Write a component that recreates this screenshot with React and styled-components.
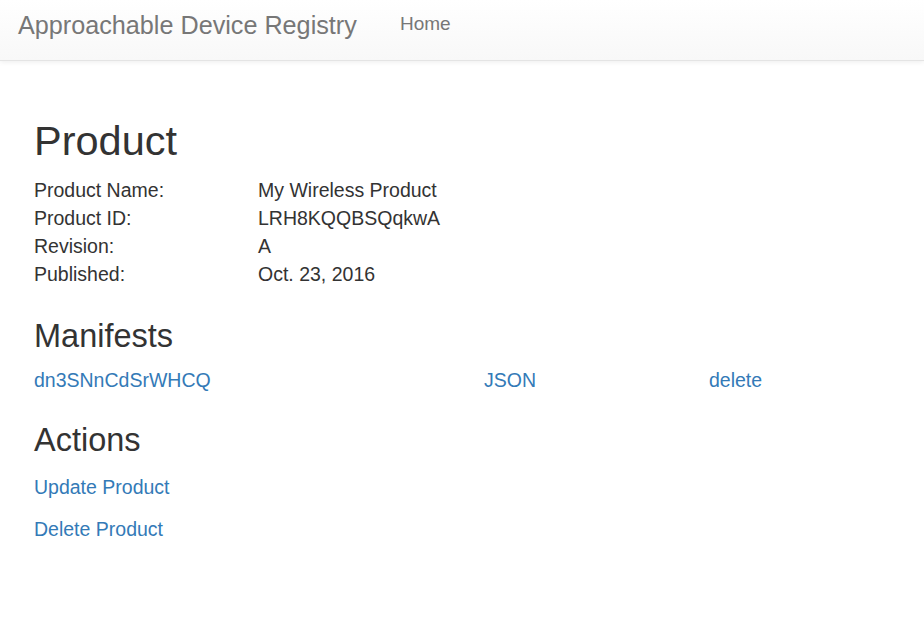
import React from 'react';
import styled, { createGlobalStyle } from 'styled-components';

const GlobalStyle = createGlobalStyle`
  html, body {
    margin: 0;
    padding: 0;
    background: #fff;
  }
  body {
    font-family: "Liberation Sans", Arial, Helvetica, sans-serif;
    color: #333;
  }
`;

const Navbar = styled.nav`
  display: flex;
  align-items: flex-start;
  height: 60px;
  padding: 0 18px;
  box-sizing: content-box;
  background-image: linear-gradient(to bottom, #fff 0, #f8f8f8 100%);
  border-bottom: 1px solid #e4e4e4;
  box-shadow: 0 1px 5px rgba(0, 0, 0, 0.075);
`;

const Brand = styled.a`
  width: 382px;
  padding-top: 10px;
  font-size: 25.2px;
  line-height: 30px;
  color: #777;
  text-decoration: none;
`;

const NavLink = styled.a`
  padding-top: 12px;
  font-size: 19px;
  line-height: 24px;
  color: #777;
  text-decoration: none;
`;

const Main = styled.main`
  padding: 0 34px;
`;

const Title = styled.h1`
  margin: 57px 0 0;
  font-size: 41.5px;
  font-weight: 500;
  line-height: 1.1;
  color: #333;
`;

const Section = styled.h3`
  margin: ${p => p.$top}px 0 0;
  font-size: 32.5px;
  font-weight: 500;
  line-height: 1.1;
  color: #333;
`;

const Details = styled.dl`
  display: grid;
  grid-template-columns: 224px 1fr;
  margin: 12px 0 0;
  font-size: 19.5px;
  line-height: 28px;

  dt, dd {
    margin: 0;
  }
`;

const ManifestRow = styled.div`
  display: grid;
  grid-template-columns: 450px 225px 1fr;
  margin-top: 12px;
  font-size: 19.5px;
  line-height: 28px;
`;

const Link = styled.a`
  color: #337ab7;
  text-decoration: none;
`;

const ActionItem = styled.p`
  margin: ${p => p.$top}px 0 0;
  font-size: 19.5px;
  line-height: 28px;
`;

const product = [
  ['Product Name:', 'My Wireless Product'],
  ['Product ID:', 'LRH8KQQBSQqkwA'],
  ['Revision:', 'A'],
  ['Published:', 'Oct. 23, 2016'],
];

export default function App() {
  return (
    <>
      <GlobalStyle />
      <Navbar>
        <Brand href="#">Approachable Device Registry</Brand>
        <NavLink href="#">Home</NavLink>
      </Navbar>
      <Main>
        <Title>Product</Title>
        <Details>
          {product.map(([label, value]) => (
            <React.Fragment key={label}>
              <dt>{label}</dt>
              <dd>{value}</dd>
            </React.Fragment>
          ))}
        </Details>

        <Section $top={31}>Manifests</Section>
        <ManifestRow>
          <Link href="#">dn3SNnCdSrWHCQ</Link>
          <Link href="#">JSON</Link>
          <Link href="#">delete</Link>
        </ManifestRow>

        <Section $top={29}>Actions</Section>
        <ActionItem $top={14}>
          <Link href="#">Update Product</Link>
        </ActionItem>
        <ActionItem $top={14}>
          <Link href="#">Delete Product</Link>
        </ActionItem>
      </Main>
    </>
  );
}
